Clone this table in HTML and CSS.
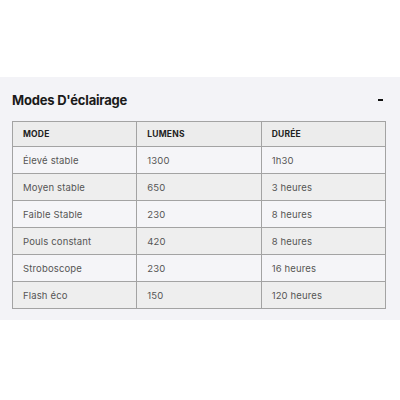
FILE: index.html
```html
<!DOCTYPE html>
<html lang="fr">
<head>
<meta charset="utf-8">
<link rel="stylesheet" href="styles.css">
</head>
<body>
<section class="panel">
  <div class="panel-head">
    <h2 class="title">Modes D'éclairage</h2>
    <span class="toggle"></span>
  </div>
  <table class="modes">
    <thead>
      <tr><th>Mode</th><th>Lumens</th><th>Durée</th></tr>
    </thead>
    <tbody>
      <tr><td>Élevé stable</td><td>1300</td><td>1h30</td></tr>
      <tr><td>Moyen stable</td><td>650</td><td>3 heures</td></tr>
      <tr><td>Faible Stable</td><td>230</td><td>8 heures</td></tr>
      <tr><td>Pouls constant</td><td>420</td><td>8 heures</td></tr>
      <tr><td>Stroboscope</td><td>230</td><td>16 heures</td></tr>
      <tr><td>Flash éco</td><td>150</td><td>120 heures</td></tr>
    </tbody>
  </table>
</section>
</body>
</html>
```
FILE: styles.css
```css
html, body {
  margin: 0;
  padding: 0;
  background: #ffffff;
  font-family: Inter, "Noto Sans", sans-serif;
  color: #222;
}
.panel {
  margin-top: 77px;
  background: #f3f3f7;
  padding: 10px 14px 11px 12px;
  height: 222px;
}
.panel-head {
  display: flex;
  align-items: center;
  justify-content: space-between;
  height: 26px;
  margin-bottom: 8px;
}
.title {
  margin: 0;
  font-size: 13px;
  font-weight: 700;
  color: #1a1a1a;
  letter-spacing: -0.2px;
}
.toggle {
  width: 5px;
  height: 2px;
  background: #111;
  margin-right: 3px;
}
.modes {
  width: 100%;
  border-collapse: collapse;
  table-layout: fixed;
  border: 1px solid #a3a3a3;
  font-size: 9.5px;
  color: #555;
}
.modes th, .modes td {
  border: 1px solid #a3a3a3;
  text-align: left;
  padding: 0 10px;
}
.modes th {
  height: 24px;
  background: #ececec;
  font-weight: 700;
  text-transform: uppercase;
  font-size: 8.5px;
  color: #222;
  letter-spacing: 0.2px;
}
.modes td {
  height: 26px;
  letter-spacing: 0.15px;
}
.modes tbody tr:nth-child(odd) td {
  background: #f5f5f8;
}
.modes tbody tr:nth-child(even) td {
  background: #eeeeee;
}
```
